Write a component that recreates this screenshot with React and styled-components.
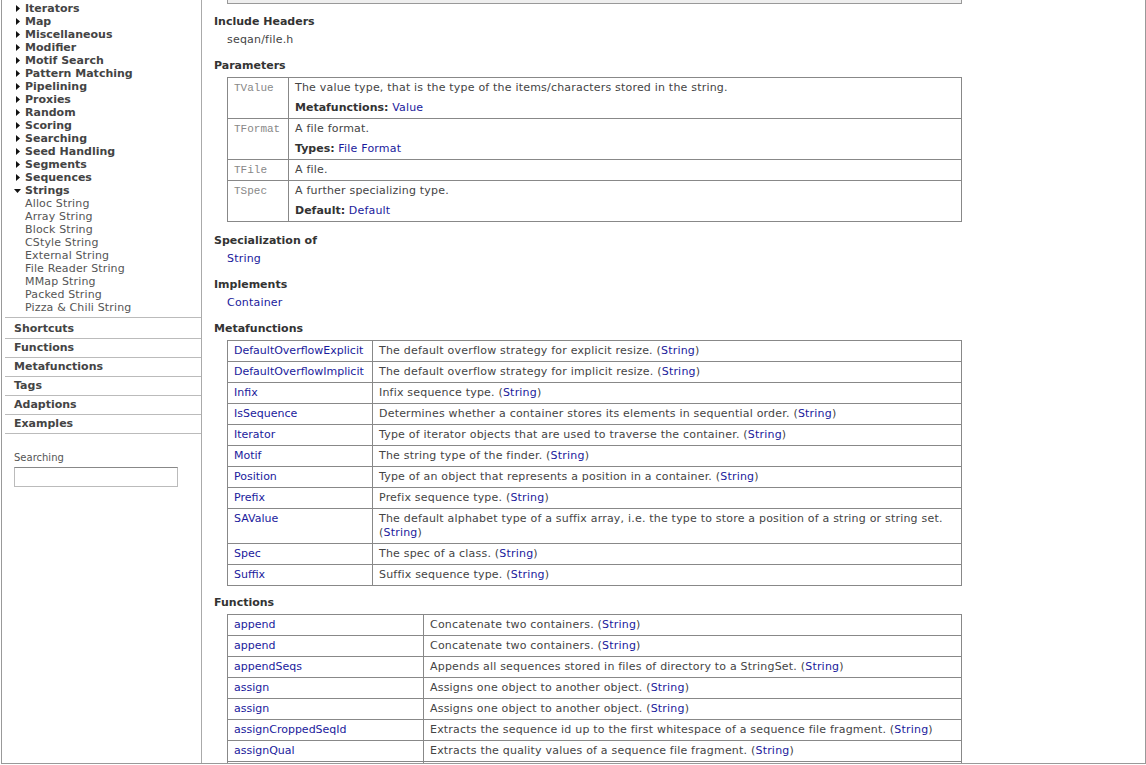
import styled, { createGlobalStyle } from "styled-components"

const GlobalStyle = createGlobalStyle`
  html, body {
    margin: 0;
    height: 765px;
    overflow: hidden;
    background: #fff;
  }
  body {
    font-family: "DejaVu Sans", Verdana, sans-serif;
    font-size: 11px;
    color: #444;
  }
  a {
    color: #1a1a9c;
    text-decoration: none;
  }
`

const groups = [
  "Iterators", "Map", "Miscellaneous", "Modifier", "Motif Search",
  "Pattern Matching", "Pipelining", "Proxies", "Random", "Scoring",
  "Searching", "Seed Handling", "Segments", "Sequences",
]

const stringKinds = [
  "Alloc String", "Array String", "Block String", "CStyle String",
  "External String", "File Reader String", "MMap String", "Packed String",
  "Pizza & Chili String",
]

const sections = ["Shortcuts", "Functions", "Metafunctions", "Tags", "Adaptions", "Examples"]

const params = [
  { name: "TValue", text: "The value type, that is the type of the items/characters stored in the string.", label: "Metafunctions:", link: "Value" },
  { name: "TFormat", text: "A file format.", label: "Types:", link: "File Format" },
  { name: "TFile", text: "A file." },
  { name: "TSpec", text: "A further specializing type.", label: "Default:", link: "Default" },
]

const metafunctions = [
  ["DefaultOverflowExplicit", "The default overflow strategy for explicit resize."],
  ["DefaultOverflowImplicit", "The default overflow strategy for implicit resize."],
  ["Infix", "Infix sequence type."],
  ["IsSequence", "Determines whether a container stores its elements in sequential order."],
  ["Iterator", "Type of iterator objects that are used to traverse the container."],
  ["Motif", "The string type of the finder."],
  ["Position", "Type of an object that represents a position in a container."],
  ["Prefix", "Prefix sequence type."],
  ["SAValue", "The default alphabet type of a suffix array, i.e. the type to store a position of a string or string set."],
  ["Spec", "The spec of a class."],
  ["Suffix", "Suffix sequence type."],
]

// only the first seven rows are visible, the rest run under the frame edge
const functions = [
  ["append", "Concatenate two containers."],
  ["append", "Concatenate two containers."],
  ["appendSeqs", "Appends all sequences stored in files of directory to a StringSet."],
  ["assign", "Assigns one object to another object."],
  ["assign", "Assigns one object to another object."],
  ["assignCroppedSeqId", "Extracts the sequence id up to the first whitespace of a sequence file fragment."],
  ["assignQual", "Extracts the quality values of a sequence file fragment."],
]

const Arrow = ({ open }) => (
  <ArrowBox $open={open}>
    {open ? (
      <svg width="7" height="4" viewBox="0 0 7 4"><polygon points="0,0 7,0 3.5,4" fill="#111" /></svg>
    ) : (
      <svg width="4" height="7" viewBox="0 0 4 7"><polygon points="0,0 4,3.5 0,7" fill="#111" /></svg>
    )}
  </ArrowBox>
)

const StringRef = () => (
  <> (<a href="#">String</a>)</>
)

export default function App() {
  return (
    <>
      <GlobalStyle />
      <Frame>
        <Sidebar>
          <Tree>
            {groups.map(g => (
              <Group key={g}><Arrow />{g}</Group>
            ))}
            <Group $open><Arrow open />Strings</Group>
            {stringKinds.map(s => (
              <Leaf key={s}>{s}</Leaf>
            ))}
          </Tree>
          <SectionList>
            {sections.map(s => (
              <SectionItem key={s}>{s}</SectionItem>
            ))}
          </SectionList>
          <SearchLabel>Searching</SearchLabel>
          <SearchInput type="text" />
        </Sidebar>

        <Main>
          <TopBox />

          <Section $gap={11}>
            <Heading>Include Headers</Heading>
            <Body>seqan/file.h</Body>
          </Section>

          <Section>
            <Heading>Parameters</Heading>
            <Table>
              <colgroup>
                <col style={{ width: 61 }} />
                <col />
              </colgroup>
              <tbody>
                {params.map(p => (
                  <tr key={p.name}>
                    <Cell><Code>{p.name}</Code></Cell>
                    <Cell $desc>
                      {p.text}
                      {p.label && (
                        <Extra><b>{p.label}</b> <a href="#">{p.link}</a></Extra>
                      )}
                    </Cell>
                  </tr>
                ))}
              </tbody>
            </Table>
          </Section>

          <Section>
            <Heading>Specialization of</Heading>
            <Body><a href="#">String</a></Body>
          </Section>

          <Section>
            <Heading>Implements</Heading>
            <Body><a href="#">Container</a></Body>
          </Section>

          <Section>
            <Heading>Metafunctions</Heading>
            <Table>
              <colgroup>
                <col style={{ width: 145 }} />
                <col />
              </colgroup>
              <tbody>
                {metafunctions.map(([n, d]) => (
                  <tr key={n}>
                    <Cell><a href="#">{n}</a></Cell>
                    <Cell $desc>{d}<StringRef /></Cell>
                  </tr>
                ))}
              </tbody>
            </Table>
          </Section>

          <Section $gap={10}>
            <Heading>Functions</Heading>
            <Table>
              <colgroup>
                <col style={{ width: 196 }} />
                <col />
              </colgroup>
              <tbody>
                {functions.map(([n, d], i) => (
                  <tr key={i}>
                    <Cell><a href="#">{n}</a></Cell>
                    <Cell $desc>{d}<StringRef /></Cell>
                  </tr>
                ))}
                <tr>
                  <Cell>&nbsp;</Cell>
                  <Cell $desc>&nbsp;</Cell>
                </tr>
              </tbody>
            </Table>
          </Section>
        </Main>
      </Frame>
    </>
  )
}

const Frame = styled.div`
  display: flex;
  height: 764px;
  margin-left: 1px;
  border: 1px solid #999;
  border-top: none;
  box-sizing: border-box;
  overflow: hidden;
`

const Sidebar = styled.aside`
  width: 199px;
  flex: none;
  border-right: 1px solid #aaa;
`

const Tree = styled.div`
  padding-top: 2px;
  padding-bottom: 3px;
`

const ArrowBox = styled.span`
  display: inline-flex;
  align-items: center;
  justify-content: flex-start;
  width: ${p => (p.$open ? "11px" : "9px")};
  height: 13px;
  vertical-align: top;
`

const Group = styled.div`
  padding-left: ${p => (p.$open ? "12px" : "14px")};
  line-height: 13px;
  height: 13px;
  font-weight: bold;
  color: #444;
  white-space: nowrap;
`

const Leaf = styled.div`
  padding-left: 23px;
  line-height: 13px;
  height: 13px;
  color: #555;
  letter-spacing: 0.15px;
  white-space: nowrap;
`

const SectionList = styled.div`
  margin-left: 3px;
  border-top: 1px solid #bbb;
  padding-top: 2px;
`

const SectionItem = styled.div`
  padding-left: 9px;
  line-height: 18px;
  height: 18px;
  border-bottom: 1px solid #bbb;
  font-weight: bold;
  color: #444;
`

const SearchLabel = styled.div`
  margin: 18px 0 0 12px;
  font-size: 10px;
  line-height: 12px;
  color: #555;
`

const SearchInput = styled.input`
  display: block;
  margin: 3px 0 0 12px;
  width: 164px;
  height: 20px;
  box-sizing: border-box;
  border: 1px solid #bbb;
  border-top-color: #888;
  padding: 0 3px;
  font: inherit;
`

const Main = styled.main`
  flex: 1;
  padding-left: 12px;
  overflow: hidden;
`

const TopBox = styled.div`
  margin-left: 13px;
  width: 735px;
  height: 4px;
  box-sizing: border-box;
  background: #eee;
  border: 1px solid #999;
  border-top: none;
`

const Section = styled.section`
  margin-top: ${p => p.$gap ?? 12}px;
`

const Heading = styled.h3`
  margin: 0 0 4px;
  font-size: 11px;
  line-height: 14px;
  font-weight: bold;
  color: #333;
`

const Body = styled.div`
  margin-left: 13px;
  line-height: 14px;
  letter-spacing: 0.2px;
`

const Table = styled.table`
  margin-left: 13px;
  width: 735px;
  border-collapse: collapse;
  table-layout: fixed;
  border: 1px solid #888;
`

const Cell = styled.td`
  border: 1px solid #888;
  padding: 3px 6px;
  line-height: 14px;
  vertical-align: top;
  color: #444;
  letter-spacing: ${p => (p.$desc ? "0.2px" : "0")};

  b {
    color: #333;
    letter-spacing: 0;
  }
`

const Code = styled.span`
  font-family: "Liberation Mono", "Courier New", monospace;
  font-size: 11px;
  color: #888;
`

const Extra = styled.div`
  margin-top: 6px;
`
